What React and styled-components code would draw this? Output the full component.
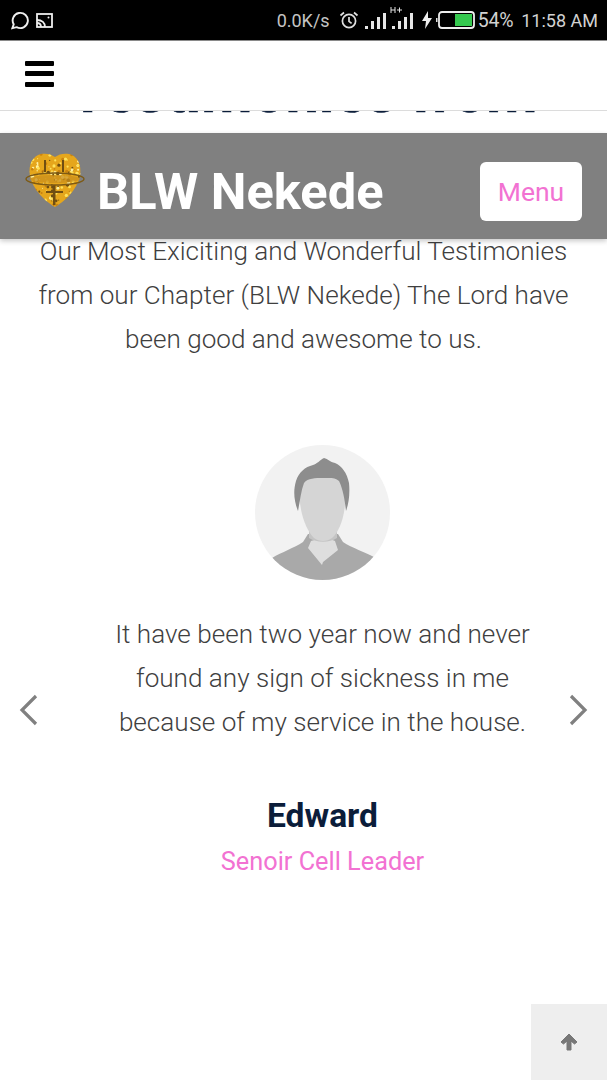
import React from "react";
import styled, { createGlobalStyle } from "styled-components";

const Global = createGlobalStyle`
  html, body { margin: 0; padding: 0; background: #fff; }
  body { font-family: Roboto, "Noto Sans", sans-serif; }
  * { box-sizing: border-box; }
`;

const Page = styled.div`
  width: 607px; height: 1080px; position: relative; overflow: hidden;
  display: flex; flex-direction: column; background: #fff;
`;
const StatusBar = styled.div`
  height: 41px; flex: none; background: #000; border-bottom: 1px solid #8a8a8a;
  display: flex; align-items: center; justify-content: space-between;
  padding: 0 9px 0 10px; color: #d2d2d2; font-size: 18px;
`;
const StatusGroup = styled.div`
  display: flex; align-items: center; gap: ${p => p.$gap || 0}px;
`;
const Speed = styled.span`margin-right: 9px; font-size: 18px; color: #c4c4c4;`;
const Percent = styled.span`margin-left: 3px; margin-right: 8px; font-size: 19.5px; letter-spacing: -0.2px;`;
const TopBar = styled.div`
  height: 70px; flex: none; background: #fff; border-bottom: 1px solid #dcdcdc;
  display: flex; align-items: center; padding: 0 0 4px 25px; position: relative; z-index: 2;
`;
const Burger = styled.div`
  display: flex; flex-direction: column; gap: 5.5px; width: 29px;
`;
const BurgerLine = styled.span`height: 5px; background: #000; border-radius: 1px;`;
const Content = styled.div`
  flex: 1; position: relative; overflow: hidden; display: flex; flex-direction: column;
`;
const ClippedTitle = styled.h1`
  margin: -43px 0 0; height: 49px; line-height: 48px; text-align: center; font-size: 59px;
  font-weight: 700; color: #0b1d3a; white-space: nowrap; overflow: hidden;
  -webkit-text-stroke: 0.6px #0b1d3a;
`;
const Nav = styled.div`
  position: absolute; top: 22px; left: 0; right: 0; height: 106px; z-index: 3;
  background: #808080; box-shadow: 0 2px 5px rgba(0,0,0,.22);
  display: flex; align-items: center; justify-content: space-between; padding: 0 25px 0 24px;
`;
const Brand = styled.div`display: flex; align-items: center; gap: 11px;`;
const BrandName = styled.div`
  font-size: 50.6px; font-weight: 700; color: #fff; margin-top: 12px; line-height: 1;
`;
const Logo = styled.svg`margin-top: -13px; flex: none;`;
const MenuButton = styled.button`
  width: 102px; height: 59px; border: 0; border-radius: 6px; background: #fff; margin-top: 10px;
  color: #f272d2; font: 400 26.5px Roboto, sans-serif; padding: 0;
`;
const Intro = styled.p`
  margin: 112px 0 0; padding: 0 30px; text-align: center; font-size: 26.1px; line-height: 44px;
  font-weight: 300; color: #3f3f3f;
`;
const Slider = styled.section`
  position: relative; margin-top: 84px; display: flex; flex-direction: column; align-items: center;
  padding-left: 38px;
`;
const Avatar = styled.svg`display: block; flex: none;`;
const Quote = styled.p`
  margin: 32px 0 0; width: 440px; text-align: center; font-size: 26.1px; line-height: 44px;
  font-weight: 300; color: #3f3f3f;
`;
const Name = styled.div`
  margin-top: 52px; font-size: 33.6px; line-height: 40px; font-weight: 700; color: #0b1d3a;
`;
const Role = styled.div`
  margin-top: 10px; font-size: 25.3px; line-height: 32px; color: #f272d2;
`;
const Arrow = styled.svg`
  position: absolute; top: 249px; ${p => p.$side}: 19px;
`;
const ToTop = styled.div`
  position: absolute; right: 0; bottom: 0; width: 76px; height: 76px; background: #eeeeee;
  display: flex; align-items: center; justify-content: center; z-index: 4;
`;

const rnd = n => {
  const v = Math.sin(n * 12.9898) * 43758.5453;
  return v - Math.floor(v);
};
const speckles = Array.from({ length: 170 }, (_, i) => ({
  x: 4 + rnd(i + 1) * 54,
  y: 1 + rnd(i + 200) * 54,
  r: 0.5 + rnd(i + 400) * 1.3,
  c: ["#6f4e12", "#ffe25a", "#c9820f", "#fff0a0"][Math.floor(rnd(i + 600) * 4)],
}));
const HEART = "M31 55C22 50 9 38 6 24 4 12 9 4 17 2c5-1 10 0 14 3 4-3 9-4 14-3 8 2 13 10 11 22-3 14-16 26-25 31z";

const LogoMark = () => (
  <Logo width="62" height="56" viewBox="0 0 62 56">
    <defs>
      <clipPath id="heart"><path d={HEART} /></clipPath>
    </defs>
    <path d={HEART} fill="#e5a61c" />
    <g clipPath="url(#heart)">
      {speckles.map((s, i) => (
        <circle key={i} cx={s.x} cy={s.y} r={s.r} fill={s.c} />
      ))}
      <rect x="29" y="33" width="2.5" height="20" fill="#6f4e12" />
      <rect x="22" y="39" width="17" height="2" fill="#6f4e12" />
      <rect x="20" y="8" width="2" height="12" fill="#6f4e12" />
      <rect x="38" y="8" width="2" height="12" fill="#6f4e12" />
    </g>
    <ellipse cx="31" cy="27" rx="29" ry="6" fill="none" stroke="#7d5a14" strokeWidth="1.4" />
    <ellipse cx="31" cy="27" rx="25" ry="4" fill="#c98f1c" fillOpacity=".75" />
  </Logo>
);

const AvatarArt = () => (
  <Avatar width="135" height="135" viewBox="0 0 135 135">
    <defs><clipPath id="disc"><circle cx="67.5" cy="67.5" r="67.5" /></clipPath></defs>
    <circle cx="67.5" cy="67.5" r="67.5" fill="#f2f2f2" />
    <g clipPath="url(#disc)">
      <path d="M17 113c10-6 22-10 31-16l5-8h30l5 8c9 6 22 10 31 15v30H17z" fill="#a9a9a9" />
      <path d="M53 103l3-7 7-2h12l5 2 3 9-15 12-1 3z" fill="#dedede" />
      <path d="M54 84h28v9c-8 5-20 5-28 0z" fill="#c4c4c4" />
      <path d="M44 42c0 26 7 43 15 51 5 4 13 4 18 0 9-8 14-25 14-51 0-14-47-14-47 0z" fill="#d5d5d5" />
      <path d="M43 66C39 56 38 46 41 36 44 27 50 22 58 20 62 19 65 15 69 13 73 14 75 17 80 18 87 21 92 28 94 38 95 48 94 58 91 66 90 56 88 44 84 36 80 32 74 33 68 33 60 33 53 33 49 38 46 46 45 56 43 66z" fill="#8d8d8d" />
    </g>
  </Avatar>
);

export default function App() {
  return (
    <Page>
      <Global />
      <StatusBar>
        <StatusGroup $gap={7}>
          <svg width="19" height="19" viewBox="0 0 20 20" fill="none" stroke="#eee" strokeWidth="2">
            <path d="M2.500 18l1.400-4A8 8 0 1 1 7 17z" />
          </svg>
          <svg width="17" height="17" viewBox="0 0 17 17" fill="none" stroke="#eee" strokeWidth="1.8">
            <rect x="1" y="2" width="15" height="13" />
            <path d="M1 8c5 0 8 3 8 7M1 11c3 0 4 2 4 4" />
            <circle cx="12.500" cy="5.500" r="1" fill="#eee" stroke="none" />
          </svg>
        </StatusGroup>
        <StatusGroup>
          <Speed>0.0K/s</Speed>
          <svg width="20" height="20" viewBox="0 0 20 20" fill="none" stroke="#e0e0e0" strokeWidth="1.7">
            <circle cx="10" cy="11" r="6.600" />
            <path d="M10 7v4.400l2.600 2M1.500 5.500L5 2.500M18.500 5.500L15 2.500" />
          </svg>
          <svg width="49" height="28" viewBox="0 0 49 28" style={{ marginLeft: 6 }} fill="#e6e6e6">
            <rect x="0" y="20" width="3" height="3" /><rect x="6" y="15" width="3" height="8" />
            <rect x="12" y="11" width="3" height="12" /><rect x="18" y="7" width="3" height="16" />
            <rect x="27" y="20" width="3" height="3" /><rect x="33" y="15" width="3" height="8" />
            <rect x="39" y="11" width="3" height="12" /><rect x="45" y="7" width="3" height="16" />
            <path d="M26 1v6M30 1v6M26 4h4M32 4h5M34.500 1.500v5" stroke="#e6e6e6" strokeWidth="1" fill="none" />
          </svg>
          <svg width="12" height="20" viewBox="0 0 12 20" style={{ marginLeft: 7 }} fill="#eee">
            <path d="M7 1L1 11h4l-1 8 7-11H7z" />
          </svg>
          <svg width="39" height="18" viewBox="0 0 39 18" style={{ marginLeft: 3 }}>
            <rect x="0" y="7" width="1.500" height="4" fill="#ddd" />
            <rect x="3" y="1" width="35" height="16" rx="3" fill="none" stroke="#eee" strokeWidth="1.800" />
            <rect x="19" y="3" width="17" height="12" fill="#35c94f" />
          </svg>
          <Percent>54%</Percent>
          <span>11:58 AM</span>
        </StatusGroup>
      </StatusBar>
      <TopBar>
        <Burger><BurgerLine /><BurgerLine /><BurgerLine /></Burger>
      </TopBar>
      <Content>
        <ClippedTitle>Testimonies from</ClippedTitle>
        <Nav>
          <Brand>
            <LogoMark />
            <BrandName>BLW Nekede</BrandName>
          </Brand>
          <MenuButton>Menu</MenuButton>
        </Nav>
        <Intro>Our Most Exiciting and Wonderful Testimonies from our Chapter (BLW Nekede) The Lord have been good and awesome to us.</Intro>
        <Slider>
          <AvatarArt />
          <Quote>It have been two year now and never found any sign of sickness in me because of my service in the house.</Quote>
          <Name>Edward</Name>
          <Role>Senoir Cell Leader</Role>
          <Arrow $side="left" width="20" height="32" viewBox="0 0 20 32" fill="none" stroke="#808080" strokeWidth="3.200">
            <path d="M17 2L3 16l14 14" />
          </Arrow>
          <Arrow $side="right" width="20" height="32" viewBox="0 0 20 32" fill="none" stroke="#808080" strokeWidth="3.200">
            <path d="M3 2l14 14L3 30" />
          </Arrow>
        </Slider>
      </Content>
      <ToTop>
        <svg width="18" height="18" viewBox="0 0 18 18" fill="#777" stroke="#777" strokeWidth="1" strokeLinejoin="round">
          <path d="M9 1l8 8-2.500 2L11 8v9H7V8l-3.500 3L1 9z" />
        </svg>
      </ToTop>
    </Page>
  );
}
